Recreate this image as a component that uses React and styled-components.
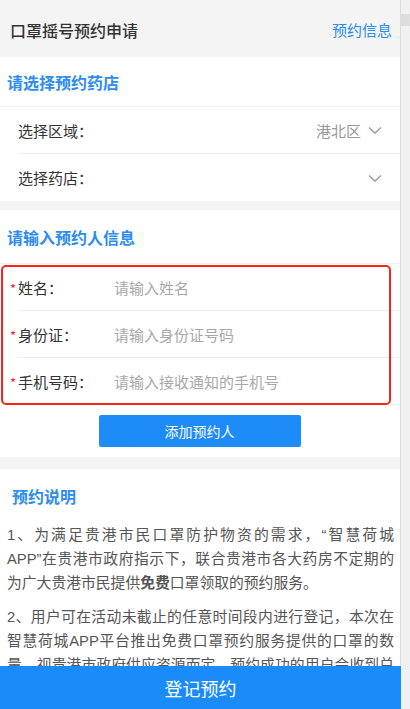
import styled, { createGlobalStyle } from 'styled-components';

const GlobalStyle = createGlobalStyle`
    * { box-sizing: border-box; }
    html, body {
        margin: 0;
        padding: 0;
        height: 100%;
        overflow: hidden;
        background: #f4f4f4;
        font-family: "Noto Sans CJK SC", "Noto Sans", sans-serif;
    }
`

const Shell = styled.div`
    display: flex;
    width: 410px;
    height: 709px;
    overflow: hidden;
`

const Page = styled.main`
    width: 401px;
    flex-shrink: 0;
    background: #f4f4f4;
    border-right: 1px solid #dcdcdc;
`

const Scrollbar = styled.div`
    flex: 1;
    background: #f1f1f1;
    display: flex;
    flex-direction: column;
    padding-top: 14px;
`

const Thumb = styled.div`
    height: 12px;
    background: #dedede;
`

const TopBar = styled.header`
    height: 57px;
    display: flex;
    align-items: center;
    justify-content: space-between;
    padding: 2px 8px 0 10px;
`

const PageTitle = styled.h1`
    margin: 0;
    font-size: 16px;
    font-weight: 500;
    color: #333;
`

const TopLink = styled.a`
    font-size: 15px;
    color: #2d8cf0;
`

const Section = styled.section`
    background: #fff;
    margin-bottom: ${p => p.$gap || 0}px;
    padding-bottom: ${p => p.$pb || 0}px;
`

const SectionTitle = styled.h2`
    margin: 0;
    height: ${p => p.$h || 50}px;
    display: flex;
    align-items: center;
    padding-left: ${p => p.$indent || 7}px;
    font-size: 16px;
    font-weight: 700;
    color: #2d8cf0;
    border-bottom: ${p => p.$plain ? 'none' : '1px solid #f2f2f2'};
`

const Row = styled.div`
    height: 47px;
    margin-left: 18px;
    display: flex;
    align-items: center;
    font-size: 15px;
    color: #333;
    border-bottom: ${p => p.$last ? 'none' : '1px solid #efefef'};
`

const RowLabel = styled.span`
    flex: 1;
`

const RowValue = styled.span`
    color: #999;
    margin-right: 6px;
`

const Chevron = styled.svg`
    width: 16px;
    height: 16px;
    margin-right: 17px;
`

const FieldGroup = styled.div`
    position: relative;
`

const Highlight = styled.div`
    position: absolute;
    left: 1px;
    top: 1px;
    width: 390px;
    height: 140px;
    border: 2.5px solid #f5261c;
    border-radius: 5px;
    pointer-events: none;
`

const Field = styled.div`
    height: 47px;
    margin-left: 18px;
    display: flex;
    align-items: center;
    font-size: 15px;
    border-bottom: 1px solid #efefef;
    position: relative;
`

const Star = styled.span`
    position: absolute;
    left: -8px;
    top: 15px;
    color: #ee1c3a;
    font-size: 13px;
`

const FieldLabel = styled.span`
    width: 96px;
    color: #333;
`

const FieldInput = styled.input`
    flex: 1;
    border: none;
    outline: none;
    font: inherit;
    font-size: 15px;
    color: #333;
    padding: 0;
    &::placeholder { color: #a8a8a8; }
`

const ButtonRow = styled.div`
    display: flex;
    justify-content: center;
    padding-top: 10px;
    padding-right: 1px;
`

const AddButton = styled.button`
    width: 202px;
    height: 32px;
    border: none;
    border-radius: 2px;
    background: #1e8cf8;
    color: #fff;
    font: inherit;
    font-size: 14px;
`

const Notes = styled.div`
    padding: 0 6px 80px 7px;
`

const Para = styled.p`
    margin: 0 0 10px;
    font-family: "Liberation Sans", "Noto Sans CJK SC", sans-serif;
    font-size: 14.8px;
    line-height: 24px;
    color: #555;
    text-align: justify;
`

const Submit = styled.button`
    position: fixed;
    left: 0;
    bottom: 0;
    width: 401px;
    height: 43px;
    border: none;
    background: #1b8bf9;
    color: #fff;
    font: inherit;
    font-size: 18px;
`

const Down = () => (
    <Chevron viewBox="0 0 16 16" fill="none" stroke="#999" strokeWidth="1.3">
        <path d="M2 5.5 L8 11 L14 5.5" />
    </Chevron>
)

const App = () => (
    <Shell>
        <GlobalStyle />
        <Page>
            <TopBar>
                <PageTitle>口罩摇号预约申请</PageTitle>
                <TopLink>预约信息</TopLink>
            </TopBar>

            <Section $gap={9}>
                <SectionTitle>请选择预约药店</SectionTitle>
                <Row>
                    <RowLabel>选择区域：</RowLabel>
                    <RowValue>港北区</RowValue>
                    <Down />
                </Row>
                <Row $last>
                    <RowLabel>选择药店：</RowLabel>
                    <Down />
                </Row>
            </Section>

            <Section $gap={12} $pb={10}>
                <SectionTitle $h={54}>请输入预约人信息</SectionTitle>
                <FieldGroup>
                    <Field>
                        <Star>*</Star>
                        <FieldLabel>姓名：</FieldLabel>
                        <FieldInput placeholder="请输入姓名" />
                    </Field>
                    <Field>
                        <Star>*</Star>
                        <FieldLabel>身份证：</FieldLabel>
                        <FieldInput placeholder="请输入身份证号码" />
                    </Field>
                    <Field>
                        <Star>*</Star>
                        <FieldLabel>手机号码：</FieldLabel>
                        <FieldInput placeholder="请输入接收通知的手机号" />
                    </Field>
                    <Highlight />
                </FieldGroup>
                <ButtonRow>
                    <AddButton>添加预约人</AddButton>
                </ButtonRow>
            </Section>

            <Section>
                <SectionTitle $plain $h={54} $indent={12}>预约说明</SectionTitle>
                <Notes>
                    <Para>1、为满足贵港市民口罩防护物资的需求，“智慧荷城APP”在贵港市政府指示下，联合贵港市各大药房不定期的为广大贵港市民提供<b>免费</b>口罩领取的预约服务。</Para>
                    <Para>2、用户可在活动未截止的任意时间段内进行登记，本次在智慧荷城APP平台推出免费口罩预约服务提供的口罩的数量，视贵港市政府供应资源而定。预约成功的用户会收到兑换码短信，凭短信到指定药店领取口罩。</Para>
                </Notes>
            </Section>
        </Page>
        <Scrollbar>
            <Thumb />
        </Scrollbar>
        <Submit>登记预约</Submit>
    </Shell>
)

export default App;
